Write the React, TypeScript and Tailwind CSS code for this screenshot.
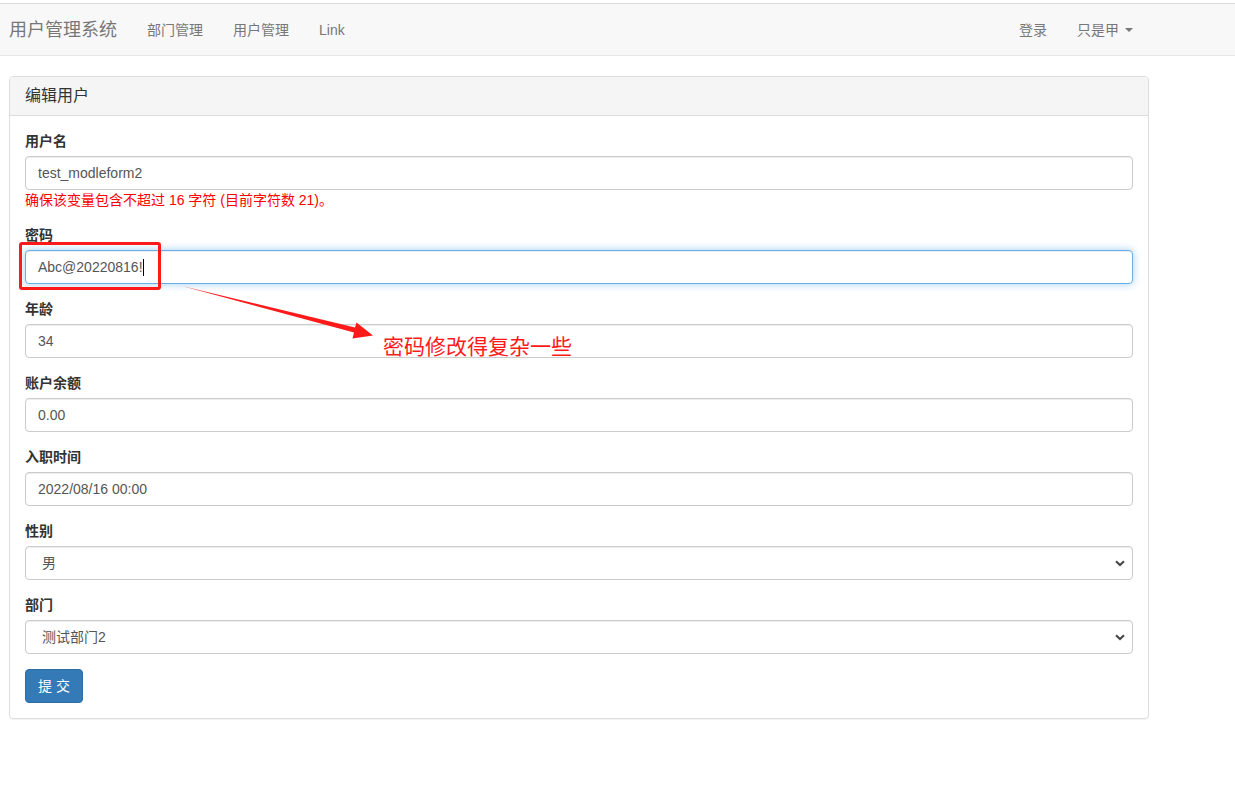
import React from "react";

const FONT = { fontFamily: '"Liberation Sans", "Noto Sans CJK SC", sans-serif' };

function Field({ label, value, focused, select, after }: { label: string; value: string; focused?: boolean; select?: boolean; after?: React.ReactNode }) {
  return (
    <div className="mb-[15px]">
      <div className="text-[14px] leading-[20px] font-bold text-[#333] mb-[5px]">{label}</div>
      <div
        className={
          "h-[34px] rounded-[4px] border bg-white flex items-center text-[14px] text-[#555] " +
          (focused
            ? "border-[#66afe9] shadow-[inset_0_1px_1px_rgba(0,0,0,0.075),0_0_8px_rgba(102,175,233,0.6)]"
            : "border-[#ccc] shadow-[inset_0_1px_1px_rgba(0,0,0,0.075)]") +
          (select ? " pl-[16px] pr-[6px]" : " px-[12px]")
        }
      >
        <span className="flex-1 leading-[20px]">
          {value}
          {focused && <span className="inline-block w-[1px] h-[17px] bg-black align-middle ml-0 -mt-[2px]" />}
        </span>
        {select && (
          <svg width="10" height="7" viewBox="0 0 10 7" className="mr-[1px]">
            <path d="M1 1.2 L5 5 L9 1.2" fill="none" stroke="#444" strokeWidth="2" />
          </svg>
        )}
      </div>
      {after}
    </div>
  );
}

export default function App() {
  return (
    <div className="relative w-[1235px] h-[792px] bg-white" style={FONT}>
      <div className="pt-[3px]">
        <div className="bg-[#f8f8f8] border-t border-t-[#dadada] border-b border-b-[#e7e7e7] h-[53px]">
          <div className="ml-[9px] w-[1139px] h-[51px] flex items-center text-[#777]">
            <div className="text-[18px] leading-[20px] pr-[15px]">用户管理系统</div>
            <div className="px-[15px] text-[14px] leading-[20px]">部门管理</div>
            <div className="px-[15px] text-[14px] leading-[20px]">用户管理</div>
            <div className="px-[15px] text-[14px] leading-[20px]">Link</div>
            <div className="flex-1" />
            <div className="px-[15px] text-[14px] leading-[20px]">登录</div>
            <div className="pl-[15px] pr-[15px] text-[14px] leading-[20px] flex items-center">
              只是甲
              <span className="ml-[6px] inline-block w-0 h-0 border-t-[4px] border-t-[#777] border-l-[4px] border-l-transparent border-r-[4px] border-r-transparent" />
            </div>
          </div>
        </div>
      </div>

      <div className="ml-[9px] mt-[20px] w-[1140px] border border-[#ddd] rounded-[4px] shadow-[0_1px_1px_rgba(0,0,0,0.05)]">
        <div className="bg-[#f5f5f5] border-b border-[#ddd] px-[15px] py-[10px] text-[16px] leading-[18px] text-[#333] rounded-t-[3px]">
          编辑用户
        </div>
        <div className="p-[15px]">
          <Field
            label="用户名"
            value="test_modleform2"
            after={<div className="text-[14px] leading-[20px] text-[#f00]">确保该变量包含不超过 16 字符 (目前字符数 21)。</div>}
          />
          <Field label="密码" value="Abc@20220816!" focused />
          <Field label="年龄" value="34" />
          <Field label="账户余额" value="0.00" />
          <Field label="入职时间" value="2022/08/16 00:00" />
          <Field label="性别" value="男" select />
          <Field label="部门" value="测试部门2" select />
          <button className="h-[34px] px-[12px] rounded-[4px] bg-[#337ab7] border border-[#2e6da4] text-white text-[14px] leading-[20px]">
            提 交
          </button>
        </div>
      </div>

      {/* annotation overlay */}
      <div className="absolute left-[19px] top-[242px] w-[142px] h-[48px] border-[3px] border-[#ff1a1a] rounded-[3px]" />
      <svg className="absolute left-0 top-0 pointer-events-none" width="1235" height="792">
        <polygon
          points="182,286 355,327.5 356.5,322.5 373,335.5 352.5,338.5 354,332.5"
          fill="#ff1a1a"
        />
      </svg>
      <div className="absolute left-[383px] top-[333px] text-[21px] leading-[28px] text-[#ff1a1a]">密码修改得复杂一些</div>
    </div>
  );
}
